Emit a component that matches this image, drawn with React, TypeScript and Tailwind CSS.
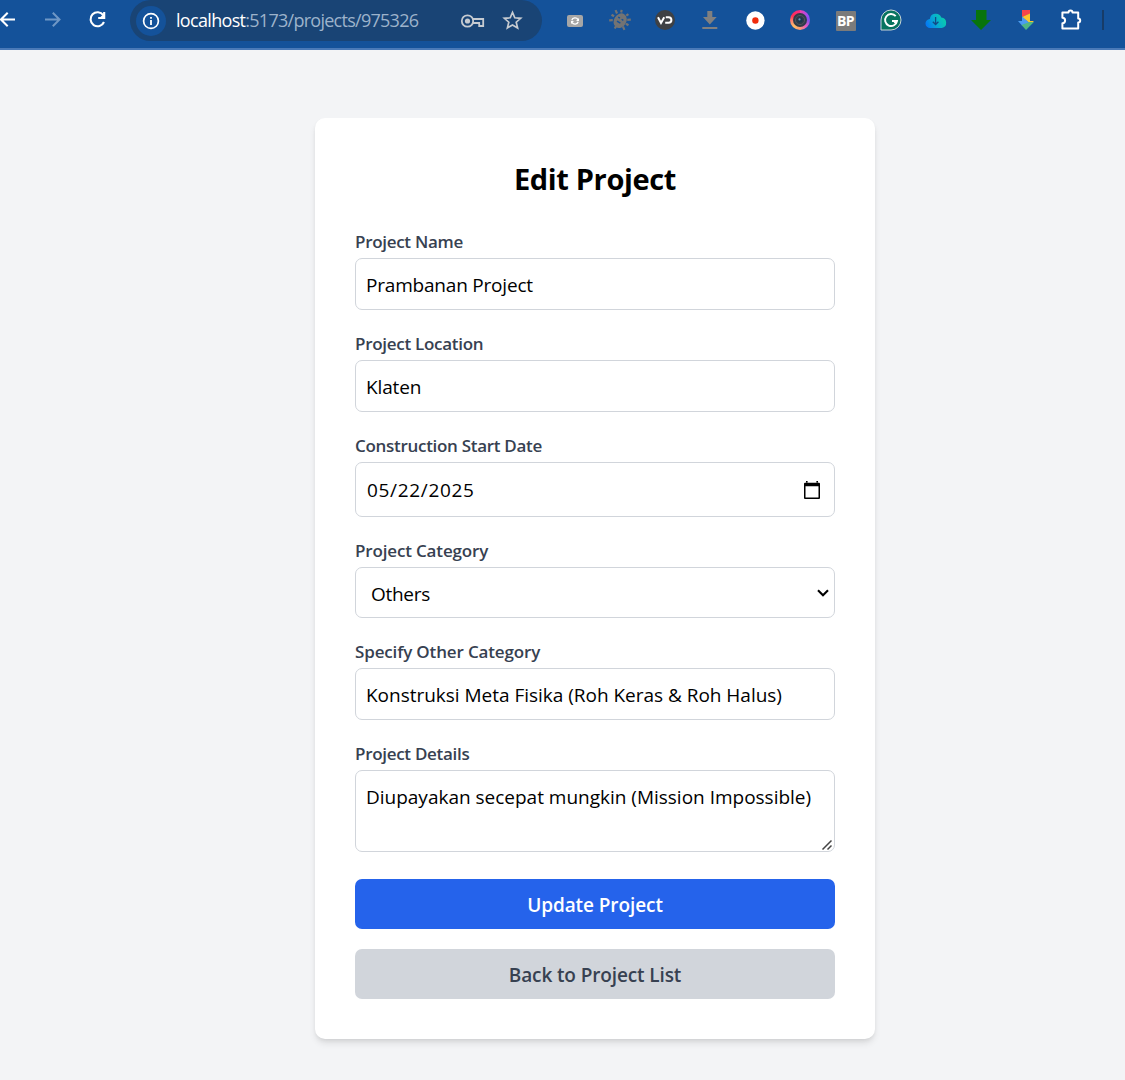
import React from "react";

function Ico({ w = 24, h = 24, children }: { w?: number; h?: number; children: React.ReactNode }) {
  return (
    <svg width={w} height={h} viewBox={`0 0 ${w} ${h}`} fill="none" className="block shrink-0">
      {children}
    </svg>
  );
}

function Slot({ children }: { children: React.ReactNode }) {
  return <div className="flex w-[45.1px] shrink-0 items-center justify-center">{children}</div>;
}

function Toolbar() {
  return (
    <header className="h-[50px] w-full overflow-hidden border-b-2 border-[#4a7ab8] bg-[#14529a]">
      <div className="flex h-[41px] items-center">
        <div className="flex h-[39px] w-[130px] shrink-0 items-center self-start">
          <Ico w={30} h={24}>
            <path d="M15 11.5H1M7.7 4.8L1 11.5l6.7 6.7" stroke="#fff" strokeWidth="2" />
          </Ico>
          <div className="ml-[15px]">
            <Ico w={20}>
              <path d="M0 11.5h14M7.8 4.8l6.7 6.7-6.7 6.7" stroke="#6f97c5" strokeWidth="2" />
            </Ico>
          </div>
          <div className="ml-[21px]">
            <Ico>
              <path d="M17.3 7.2A7 7 0 1 0 18 14M18.2 4v6h-6" stroke="#fff" strokeWidth="2.1" />
              <path d="M18.5 5v4.8h-4.8z" fill="#fff" />
            </Ico>
          </div>
        </div>
        <div className="flex h-[41px] w-[412px] shrink-0 items-center rounded-[20.5px] bg-[#194475]">
          <div className="ml-[6px] flex size-[30px] items-center justify-center rounded-full bg-[#14529a]">
            <Ico w={18} h={18}>
              <circle cx="9" cy="9" r="7.4" stroke="#fff" strokeWidth="1.7" />
              <path d="M9 8v5M9 5v1.8" stroke="#fff" strokeWidth="1.8" />
            </Ico>
          </div>
          <div className="ml-[10px] w-[283px] whitespace-nowrap pb-px font-['Open_Sans'] text-[18px] leading-[24px] tracking-[-0.73px] text-[#9db3cb]">
            <span className="tracking-[-0.68px] text-white">localhost</span>:5173/projects/975326
          </div>
          <Ico w={26} h={24}>
            <circle cx="8.5" cy="12" r="5.7" stroke="#c6cbd1" strokeWidth="1.8" />
            <circle cx="8.5" cy="12" r="2.6" fill="#c6cbd1" />
            <path d="M13.7 10h10.5v7h-4v-3H14" stroke="#c6cbd1" strokeWidth="1.8" />
          </Ico>
          <div className="ml-[17px]">
            <Ico w={22} h={24}>
              <path
                d="M10.5 3.4l2.3 5.4 5.9.5-4.5 3.9 1.4 5.7-5.1-3-5.1 3 1.4-5.7-4.5-3.9 5.9-.5z"
                stroke="#c6cbd1"
                strokeWidth="1.7"
              />
            </Ico>
          </div>
        </div>
        <div className="ml-[10.4px] flex h-[40px] items-center self-start">
          <Slot>
            <div className="pt-[2px]">
              <Ico w={16} h={12}>
                <rect width="16" height="12" rx="2" fill="#a6a6a6" />
                <path d="M4.8 5.3A3.4 3.4 0 0 1 11 4.6M11.2 6.7A3.4 3.4 0 0 1 5 7.4" stroke="#fff" strokeWidth="1.3" />
                <path d="M12 3v3H9zM4 9V6h3z" fill="#fff" />
              </Ico>
            </div>
          </Slot>
          <Slot>
            <Ico w={22} h={22}>
              <g transform="rotate(32 11 11)">
                <ellipse cx="11.5" cy="11.5" rx="6.2" ry="7.7" fill="#737373" />
                <path
                  d="M5 7L2 5M4 11H1M5 15l-3 2M17 7l3-2M18 11h3M17 15l3 2M8 4L7 1.5M14 4l1-2.5M11 18v3"
                  stroke="#737373"
                  strokeWidth="2.2"
                />
                <path d="M8 9.5h2M12 9.5h2M9 13.5h4" stroke="#14529a" strokeWidth="1.4" />
              </g>
            </Ico>
          </Slot>
          <Slot>
            <Ico w={20} h={20}>
              <circle cx="10" cy="10" r="10" fill="#3f4144" />
              <path d="M3 7.2l3 5.8 3.2-5.8M10.8 7.2h2.8a2.8 2.8 0 0 1 0 5.6h-3.4" stroke="#fff" strokeWidth="2" />
            </Ico>
          </Slot>
          <Slot>
            <Ico w={16} h={20}>
              <path d="M5.3 1h5v6h4.4L7.8 14.4 1 7h4.3zM.3 17h15v2h-15z" fill="#808080" />
            </Ico>
          </Slot>
          <Slot>
            <Ico w={20} h={20}>
              <circle cx="10.4" cy="10.5" r="9.2" fill="#fff" />
              <circle cx="10.4" cy="10.5" r="3.2" fill="#f02c0c" />
            </Ico>
          </Slot>
          <Slot>
            <div className="flex size-[20px] items-center justify-center rounded-full bg-[conic-gradient(#ef3fae,#a04df0_16%,#8350ef_25%,#e95bc0_38%,#fb9b72_50%,#ffbd66_62%,#ff8a70_72%,#ff2f55_83%,#fb2684)]">
              <Ico w={14} h={14}>
                <circle cx="7" cy="7" r="7" fill="#303b48" />
                <circle cx="7" cy="7" r="4.6" stroke="#4c5560" strokeWidth="1" />
                <circle cx="7" cy="7" r="2.6" fill="#183650" />
                <circle cx="6.5" cy="6.4" r="1.1" fill="#7199b5" />
              </Ico>
            </div>
          </Slot>
          <Slot>
            <div className="mt-[2px] flex size-[20px] items-center justify-center rounded-[1px] bg-[#7b7b7b] font-['Open_Sans'] text-[14px] font-bold leading-none tracking-[-0.5px] text-white">
              BP
            </div>
          </Slot>
          <Slot>
            <Ico w={22} h={22}>
              <path d="M1 21V11A10 10 0 1 1 11 21z" fill="#08745f" stroke="#c9d5d8" strokeWidth="1" />
              <path d="M15.7 7.2A6 6 0 1 0 17 12h-5M14.4 14.2L17 11.8" stroke="#fff" strokeWidth="1.9" />
            </Ico>
          </Slot>
          <Slot>
            <Ico w={22} h={18}>
              <defs>
                <linearGradient id="cloud" x1="1" y1="14" x2="20" y2="4" gradientUnits="userSpaceOnUse">
                  <stop stopColor="#0577f5" />
                  <stop offset=".5" stopColor="#07afd0" />
                  <stop offset="1" stopColor="#0ad0a5" />
                </linearGradient>
              </defs>
              <path
                d="M5.2 17a4.5 4.5 0 0 1-.4-9A6 6 0 0 1 16.3 6.5a5.3 5.3 0 0 1 .5 10.5z"
                fill="url(#cloud)"
              />
              <path d="M10.6 6v7.3M7.8 10.7l2.8 2.8 2.8-2.8" stroke="#124a87" strokeWidth="1.3" />
            </Ico>
          </Slot>
          <Slot>
            <Ico w={20} h={20}>
              <path d="M5 0h10.5v10H20L10 20 0 10h5z" fill="#08740c" />
            </Ico>
          </Slot>
          <Slot>
            <Ico w={18} h={20}>
              <path d="M5 0h8v4L5 7z" fill="#f6454a" />
              <path d="M13 3.5V11h4L13.5 14 5 7z" fill="#fbc52c" />
              <path d="M5 6.5L13.8 14 9 15.5 5 15.6 1 11h4z" fill="#4b9cf0" />
              <path d="M4.5 15l8-3h4.4L9 20z" fill="#4fb784" />
            </Ico>
          </Slot>
          <Slot>
            <Ico w={24} h={24}>
              <path
                d="M3.4 4.5h6.1a2 2 0 0 1 4 0h5.7v6a2 2 0 0 1 0 4v6H3.4v-5.3a2.7 2.7 0 0 0 0-5.4z"
                stroke="#fff"
                strokeWidth="2"
                strokeLinejoin="round"
              />
            </Ico>
          </Slot>
          <div className="ml-[8.6px] h-[20px] w-[2px] shrink-0 bg-[#173c68]" />
        </div>
      </div>
    </header>
  );
}

const box =
  "flex w-full items-center whitespace-nowrap rounded-[7px] border border-[#d1d5db] bg-white px-[10px] text-[19px] text-black";

function Field({ label, spacing, children }: { label: string; spacing: string; children: React.ReactNode }) {
  return (
    <div className="mb-5">
      <div className={`mb-[5px] h-[25px] whitespace-nowrap text-[17px] font-semibold leading-[27px] text-[#374151] ${spacing}`}>
        {label}
      </div>
      {children}
    </div>
  );
}

export default function App() {
  return (
    <div className="h-[1080px] w-[1125px] overflow-hidden bg-[#f3f4f6] font-['Open_Sans',sans-serif]">
      <Toolbar />
      <main className="ml-[315px] mt-[68px] h-[921px] w-[560px] rounded-[10px] bg-white p-10 shadow-[0_5px_7px_-1px_rgba(0,0,0,0.1),0_2px_5px_-2px_rgba(0,0,0,0.1)]">
        <h1 className="mb-[30px] h-[40px] whitespace-nowrap text-center text-[29px] font-bold leading-[42px] tracking-[-0.35px] text-black">
          Edit Project
        </h1>
        <Field label="Project Name" spacing="tracking-[-0.3px]">
          <div role="textbox" className={`${box} h-[52px] pt-[2px] tracking-[-0.2px]`}>
            <span>Prambanan Project</span>
          </div>
        </Field>
        <Field label="Project Location" spacing="tracking-[-0.28px]">
          <div role="textbox" className={`${box} h-[52px] pt-[2px] tracking-[-0.15px]`}>
            <span>Klaten</span>
          </div>
        </Field>
        <Field label="Construction Start Date" spacing="tracking-[-0.3px]">
          <div role="textbox" className={`${box} h-[55px] justify-between`}>
            <span className="ml-px pt-[2px] tracking-[0.68px]">05/22/2025</span>
            <Ico w={24} h={24}>
              <path
                d="M5 4.7h14a1 1 0 0 1 1 1V20a1 1 0 0 1-1 1H5a1 1 0 0 1-1-1V5.7a1 1 0 0 1 1-1zM5.5 8.2v11.3h13V8.2zM6 3h1.6v2H6zM16.4 3H18v2h-1.6z"
                fill="#000"
                fillRule="evenodd"
              />
            </Ico>
          </div>
        </Field>
        <Field label="Project Category" spacing="tracking-[-0.16px]">
          <div role="combobox" className={`${box} h-[51px] justify-between pl-[15px] pr-[4px]`}>
            <span className="pt-[3px] tracking-[-0.3px]">Others</span>
            <Ico w={14} h={14}>
              <path d="M2 4.3l5 5 5-5" stroke="#000" strokeWidth="2.1" />
            </Ico>
          </div>
        </Field>
        <Field label="Specify Other Category" spacing="tracking-[-0.15px]">
          <div role="textbox" className={`${box} h-[52px] pt-[2px] tracking-[-0.02px]`}>
            <span>Konstruksi Meta Fisika (Roh Keras &amp; Roh Halus)</span>
          </div>
        </Field>
        <Field label="Project Details" spacing="tracking-[-0.3px]">
          <div role="textbox" className={`${box} relative h-[82px] items-start pt-[11px] leading-[30px] tracking-[-0.01px]`}>
            <span>Diupayakan secepat mungkin (Mission Impossible)</span>
            <div className="absolute bottom-0 right-[1px]">
              <Ico w={12} h={12}>
                <path d="M1.5 10.5L10.5 1.5M6.5 10.5l4-4" stroke="#444" strokeWidth="1.5" />
              </Ico>
            </div>
          </div>
        </Field>
        <button className="mt-[27px] block h-[50px] w-full whitespace-nowrap rounded-[7px] bg-[#2563eb] text-[19px] font-semibold leading-[52px] tracking-[-0.08px] text-white">
          Update Project
        </button>
        <button className="mt-5 block h-[50px] w-full whitespace-nowrap rounded-[7px] bg-[#d1d5db] text-[19px] font-semibold leading-[52px] tracking-[-0.12px] text-[#374151]">
          Back to Project List
        </button>
      </main>
    </div>
  );
}
